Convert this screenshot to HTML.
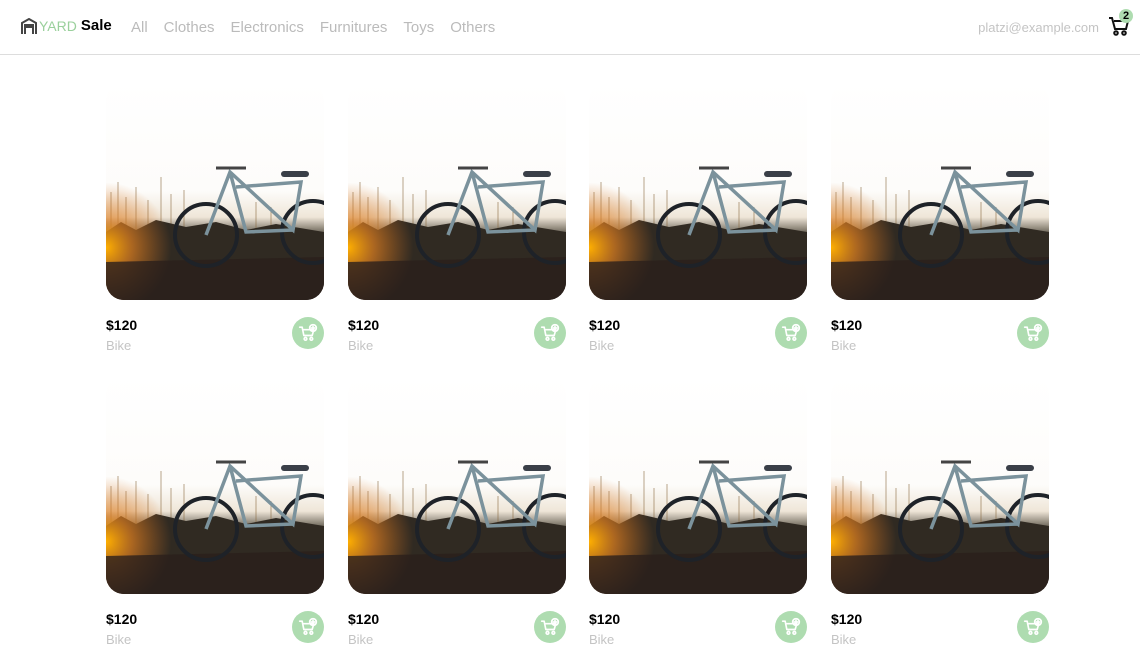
<!DOCTYPE html>
<html><head><meta charset="utf-8"><style>
*{margin:0;padding:0;box-sizing:border-box}
body{width:1140px;height:647px;overflow:hidden;background:#fff;font-family:"Liberation Sans",sans-serif}
nav{height:55px;border-bottom:1px solid #ddd;position:relative}
.logo{position:absolute;left:21px;top:17px;display:flex;align-items:center}
.logo b{font-size:15px;color:#000;margin-left:4px}
.logo span{color:#9ad09c;font-size:14px;margin-left:2px}
.links{position:absolute;left:131px;top:19px;font-size:15px;color:#bbb}
.links a{margin-right:16px}
.mail{position:absolute;right:41px;top:20px;font-size:13px;color:#c4c4c4}
.cart{position:absolute;right:10px;top:13px}
.badge{position:absolute;right:7px;top:9px;width:14px;height:14px;border-radius:50%;background:#aedcb0;font-size:11px;font-weight:bold;text-align:center;line-height:14px}
.card{position:absolute;width:218px}
.img{display:block;width:218px;height:218px;border-radius:18px;overflow:hidden}
.price{position:absolute;top:235px;left:0;font-size:14px;font-weight:bold}
.name{position:absolute;top:256px;left:0;font-size:13px;color:#c4c4c4}
.btn{position:absolute;left:186px;top:235px;width:32px;height:32px;border-radius:50%;background:#aedcb0}
.btn svg{position:absolute;left:6px;top:6px}
</style></head><body>
<svg width="0" height="0" style="position:absolute"><defs>
<linearGradient id="g" x1="0" y1="0" x2="0" y2="1"><stop offset="0" stop-color="#fff"/><stop offset=".5" stop-color="#fdfcfa"/><stop offset=".62" stop-color="#efe6d8"/><stop offset=".72" stop-color="#3a3428"/><stop offset="1" stop-color="#2a1c1c"/></linearGradient>
<radialGradient id="o" cx="0" cy=".76" r=".3"><stop offset="0" stop-color="#ffb000"/><stop offset=".4" stop-color="#e08020" stop-opacity=".7"/><stop offset="1" stop-color="#d07020" stop-opacity="0"/></radialGradient>
<symbol id="pic" viewBox="0 0 218 218">
<rect width="218" height="218" fill="url(#g)"/>
<g stroke="#8a6a40" stroke-width="1" opacity=".6"><path d="M5 150V110M12 150V100M20 150V115M30 150V105M42 150V118M55 150V95M65 150V112M78 150V108M150 150V120M165 150V125"/></g>
<path d="M0 150 L15 140 L30 148 L50 138 L80 145 L110 140 L140 148 L170 142 L218 150 L218 218 L0 218Z" fill="#302a22"/>
<rect width="218" height="218" fill="url(#o)"/>
<path d="M0 180 L218 175 L218 218 L0 218Z" fill="#2b1f1c" opacity=".8"/>
<g fill="none" stroke="#1e2228" stroke-width="4"><circle cx="100" cy="153" r="31"/><circle cx="207" cy="150" r="31"/></g>
<g fill="none" stroke="#7b929c" stroke-width="3.5"><path d="M100 153 L124 90 L187 148 L195 100 L130 105 M124 90 L140 150 L187 148"/></g>
<path d="M178 92 h22" stroke="#3a3f48" stroke-width="6" stroke-linecap="round"/>
<path d="M110 86 h30" stroke="#444" stroke-width="3"/>
</symbol>
<symbol id="cb" viewBox="0 0 24 24"><g fill="none" stroke="#fff" stroke-width="2" stroke-linecap="round" stroke-linejoin="round"><path d="M2 5h3l2 10h10l2-7H7"/><circle cx="9" cy="19" r="1.6"/><circle cx="16" cy="19" r="1.6"/><circle cx="18" cy="6" r="4"/><path d="M18 4v4M16 6h4"/></g></symbol>
</defs></svg>
<nav>
<div class="logo"><svg width="16" height="16" viewBox="0 0 16 16"><path d="M1 16V5L8 1l7 4v11M4 16V7h8v9M4 9h8" fill="none" stroke="#444" stroke-width="2"/></svg><span>YARD</span><b>Sale</b></div>
<div class="links"><a>All</a><a>Clothes</a><a>Electronics</a><a>Furnitures</a><a>Toys</a><a>Others</a></div>
<div class="mail">platzi@example.com</div>
<svg class="cart" width="22" height="24" viewBox="0 0 22 24"><g fill="none" stroke="#111" stroke-width="2"><path d="M1 5h3l3 11h11l2-8H6"/><circle cx="8" cy="20" r="1.8"/><circle cx="16" cy="20" r="1.8"/></g></svg>
<div class="badge">2</div>
</nav>
<div class="card" style="left:106px;top:82px"><svg class="img" viewBox="0 0 218 218"><use href="#pic"/></svg><div class="price">$120</div><div class="name">Bike</div><div class="btn"><svg width="20" height="20" viewBox="0 0 24 24"><use href="#cb"/></svg></div></div>
<div class="card" style="left:348px;top:82px"><svg class="img" viewBox="0 0 218 218"><use href="#pic"/></svg><div class="price">$120</div><div class="name">Bike</div><div class="btn"><svg width="20" height="20" viewBox="0 0 24 24"><use href="#cb"/></svg></div></div>
<div class="card" style="left:589px;top:82px"><svg class="img" viewBox="0 0 218 218"><use href="#pic"/></svg><div class="price">$120</div><div class="name">Bike</div><div class="btn"><svg width="20" height="20" viewBox="0 0 24 24"><use href="#cb"/></svg></div></div>
<div class="card" style="left:831px;top:82px"><svg class="img" viewBox="0 0 218 218"><use href="#pic"/></svg><div class="price">$120</div><div class="name">Bike</div><div class="btn"><svg width="20" height="20" viewBox="0 0 24 24"><use href="#cb"/></svg></div></div>
<div class="card" style="left:106px;top:376px"><svg class="img" viewBox="0 0 218 218"><use href="#pic"/></svg><div class="price">$120</div><div class="name">Bike</div><div class="btn"><svg width="20" height="20" viewBox="0 0 24 24"><use href="#cb"/></svg></div></div>
<div class="card" style="left:348px;top:376px"><svg class="img" viewBox="0 0 218 218"><use href="#pic"/></svg><div class="price">$120</div><div class="name">Bike</div><div class="btn"><svg width="20" height="20" viewBox="0 0 24 24"><use href="#cb"/></svg></div></div>
<div class="card" style="left:589px;top:376px"><svg class="img" viewBox="0 0 218 218"><use href="#pic"/></svg><div class="price">$120</div><div class="name">Bike</div><div class="btn"><svg width="20" height="20" viewBox="0 0 24 24"><use href="#cb"/></svg></div></div>
<div class="card" style="left:831px;top:376px"><svg class="img" viewBox="0 0 218 218"><use href="#pic"/></svg><div class="price">$120</div><div class="name">Bike</div><div class="btn"><svg width="20" height="20" viewBox="0 0 24 24"><use href="#cb"/></svg></div></div>
</body></html>
